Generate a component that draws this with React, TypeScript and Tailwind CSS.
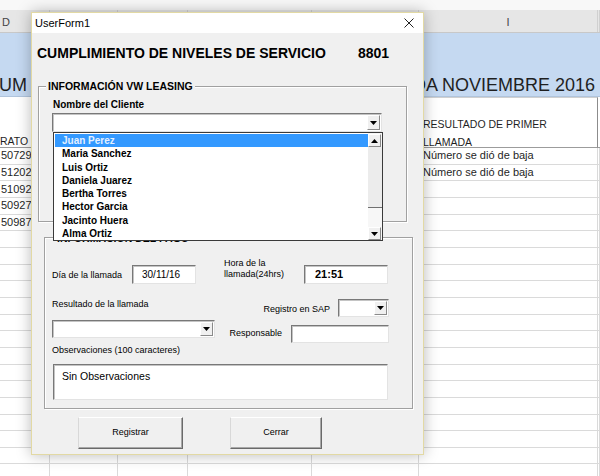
import React from "react";

const Tri = ({ up }: { up?: boolean }) => (
  <svg width="7" height="4" viewBox="0 0 7 4">
    <path d={up ? "M0 4H7L3.5 0Z" : "M0 0H7L3.5 4Z"} fill="#000" />
  </svg>
);

const sunken =
  "bg-white border border-t-[#787878] border-l-[#787878] border-r-[#e3e3e3] border-b-[#e3e3e3] shadow-[inset_1px_1px_0_#c4c4c4]";

function ArrowBtn({ up }: { up?: boolean }) {
  return (
    <div className="w-[13px] h-full flex items-center justify-center bg-[#f0f0f0] border border-t-white border-l-white border-r-[#8a8a8a] border-b-[#8a8a8a]">
      <Tri up={up} />
    </div>
  );
}

function Combo({ className }: { className: string }) {
  return (
    <div className={`${sunken} ${className} flex p-px`}>
      <div className="flex-1" />
      <ArrowBtn />
    </div>
  );
}

const cols = [50, 68, 70, 124, 107, 179, 2];
const nums = ["50729", "51202", "51092", "50927", "50987"];
const clientes = [
  "Juan Perez",
  "Maria Sanchez",
  "Luis Ortiz",
  "Daniela Juarez",
  "Bertha Torres",
  "Hector Garcia",
  "Jacinto Huera",
  "Alma Ortiz",
];

export default function App() {
  const rows = Array.from({ length: 20 }, (_, i) => i);
  return (
    <div
      className="relative w-[600px] h-[476px] overflow-hidden bg-white text-black"
      style={{ fontFamily: '"Liberation Sans", Arial, sans-serif' }}
    >
      {/* Spreadsheet background */}
      <div className="flex flex-col">
        <div className="h-[10px] bg-[#f8f8f8]" />
        <div className="h-[23px] bg-[#e6e6e6] border-b border-[#c8c8c8] flex text-[11px] text-[#444]">
          {cols.map((w, i) => (
            <div
              key={i}
              style={{ width: w }}
              className={`h-full flex items-center pt-[2px] border-r border-[#d0d0d0] ${i === 0 ? "pl-[2px]" : "justify-center"}`}
            >
              {i === 0 ? "D" : i === 5 ? "I" : ""}
            </div>
          ))}
        </div>
        <div className="h-[64px] bg-[#c5d9f1] flex justify-between pt-[42px] text-[18px] leading-[20px] text-[#1f1f1f] border-b border-[#b0c4dc]">
          <span className="-ml-[1px]">UM</span>
          <span className="pr-[5px]">CUMPLIMIENTO DA NOVIEMBRE 2016</span>
        </div>
        <div className="h-[51px] flex text-[10.5px] leading-[18px] text-[#1f1f1f]">
          {cols.map((w, i) => (
            <div
              key={i}
              style={{ width: w }}
              className={`h-full border-b border-[#9c9c9c] ${i === 5 ? "border-r border-r-[#8c8c8c] border-t border-t-[#d0d0d0] pl-[4px] pt-[17px]" : "pt-[35px]"}`}
            >
              {i === 0 ? "RATO" : i === 5 ? (
                <>
                  <div>RESULTADO DE PRIMER</div>
                  <div>LLAMADA</div>
                </>
              ) : ""}
            </div>
          ))}
        </div>
        {rows.map((r) => (
          <div key={r} className="h-[16.67px] flex text-[11px] text-[#1f1f1f]">
            {cols.map((w, i) => (
              <div
                key={i}
                style={{ width: w }}
                className={`h-full border-b border-r border-[#dadada] flex items-center leading-none ${i === 5 ? "pl-[4px]" : "pl-[1px]"}`}
              >
                {i === 0 && r < 5 ? nums[r] : i === 5 && r < 2 ? "Número se dió de baja" : ""}
              </div>
            ))}
          </div>
        ))}
      </div>

      {/* UserForm window */}
      <div className="absolute left-[31px] top-[12px] w-[393px] h-[443px] border border-[#e2d9a4] bg-[#f0f0f0] shadow-[0_0_14px_rgba(0,0,0,0.28)] flex flex-col">
        <div className="h-[20px] bg-white flex items-center justify-between pl-[3px] pr-[9px]">
          <span className="text-[11px]">UserForm1</span>
          <svg width="10" height="10" viewBox="0 0 10 10">
            <path d="M0.5 0.5L9.5 9.5M9.5 0.5L0.5 9.5" stroke="#222" strokeWidth="1" />
          </svg>
        </div>
        <div className="flex-1 flex flex-col">
          <div className="mt-[12px] pl-[5px] flex text-[14px] leading-[16px] font-bold">
            <span className="w-[321px]">CUMPLIMIENTO DE NIVELES DE SERVICIO</span>
            <span>8801</span>
          </div>

          {/* Frame 1 */}
          <div className="relative mt-[25px] ml-[6px] w-[369px] h-[136px] border border-[#a0a0a0] shadow-[inset_1px_1px_0_#fff,1px_1px_0_#fff] pt-[12px] pl-[13px]">
            <div className="absolute -top-[7px] left-[7px] px-[2px] bg-[#f0f0f0] text-[10.5px] leading-[12px] font-bold">
              INFORMACIÓN VW LEASING
            </div>
            <div className="ml-[1px] text-[10px] leading-[12px] font-bold">Nombre del Cliente</div>
            <div className="relative mt-[2px] w-[330px]">
              <Combo className="h-[19px] w-[330px]" />
              <div className="absolute top-full left-[1px] w-[330px] h-[109px] z-20 bg-white border border-[#3a3a3a] flex">
                <div className="flex-1 pt-px">
                  {clientes.map((c, i) => (
                    <div
                      key={c}
                      className={`h-[13.3px] leading-[14px] text-[10px] font-bold pl-[7px] ml-px ${i === 0 ? "bg-[#3399ff] text-[#e4f0ff]" : ""}`}
                    >
                      {c}
                    </div>
                  ))}
                </div>
                <div className="w-[14px] flex flex-col pt-px bg-[#f7f7f7]">
                  <div className="h-[13px]">
                    <ArrowBtn up />
                  </div>
                  <div className="h-[61px] bg-[#ececec] border-b border-[#707070]" />
                  <div className="flex-1" />
                  <div className="h-[13px]">
                    <ArrowBtn />
                  </div>
                </div>
              </div>
            </div>
          </div>

          {/* Frame 2 */}
          <div className="relative mt-[15px] ml-[12px] w-[369px] h-[172px] border border-[#a0a0a0] shadow-[inset_1px_1px_0_#fff,1px_1px_0_#fff] pt-[27px] pl-[7px] text-[9px]">
            <div className="absolute -top-[6px] left-[10px] px-[2px] bg-[#f0f0f0] text-[10.5px] leading-[12px] font-bold">
              INFORMACIÓN DEL PAGO
            </div>
            <div className="w-[337px] flex items-start">
              <div className="w-[80px] mt-[4px] leading-[12px]">Día de la llamada</div>
              <div className={`${sunken} w-[64px] h-[19px] pl-[9px] text-[10px] leading-[17px]`}>30/11/16</div>
              <div className="ml-[28px] w-[80px] -mt-[7px] leading-[11px]">
                <div>Hora de la</div>
                <div>llamada(24hrs)</div>
              </div>
              <div className={`${sunken} w-[84px] h-[19px] pl-[10px] text-[11px] font-bold leading-[17px]`}>21:51</div>
            </div>
            <div className="w-[337px] mt-[14px] flex justify-between">
              <div className="w-[163px] flex flex-col">
                <div className="leading-[12px]">Resultado de la llamada</div>
                <Combo className="mt-[10px] h-[18px] w-[163px]" />
              </div>
              <div className="flex flex-col items-end mt-px">
                <div className="flex items-center">
                  <span className="mr-[8px] mt-[4px]">Registro en SAP</span>
                  <Combo className="h-[18px] w-[51px]" />
                </div>
                <div className="flex items-center mt-[8px]">
                  <span className="mr-[9px]">Responsable</span>
                  <div className={`${sunken} h-[18px] w-[98px]`} />
                </div>
              </div>
            </div>
            <div className="mt-px leading-[12px]">Observaciones (100 caracteres)</div>
            <div className={`${sunken} mt-[8px] ml-px w-[335px] h-[36px] pl-[8px] pt-[5px] text-[10.5px] leading-[12px]`}>
              Sin Observaciones
            </div>
          </div>

          {/* Buttons */}
          <div className="mt-[8px] ml-[46px] flex gap-[47px] text-[9px]">
            <div className="w-[105px] h-[32px] flex items-center justify-center bg-[#f0f0f0] border border-t-white border-l-[#d8d8d8] border-r-[#6a6a6a] border-b-[#6a6a6a] shadow-[inset_-1px_-1px_0_#a8a8a8]">
              Registrar
            </div>
            <div className="w-[92px] h-[32px] flex items-center justify-center bg-[#f0f0f0] border border-t-white border-l-[#d8d8d8] border-r-[#6a6a6a] border-b-[#6a6a6a] shadow-[inset_-1px_-1px_0_#a8a8a8]">
              Cerrar
            </div>
          </div>
        </div>
      </div>
    </div>
  );
}
